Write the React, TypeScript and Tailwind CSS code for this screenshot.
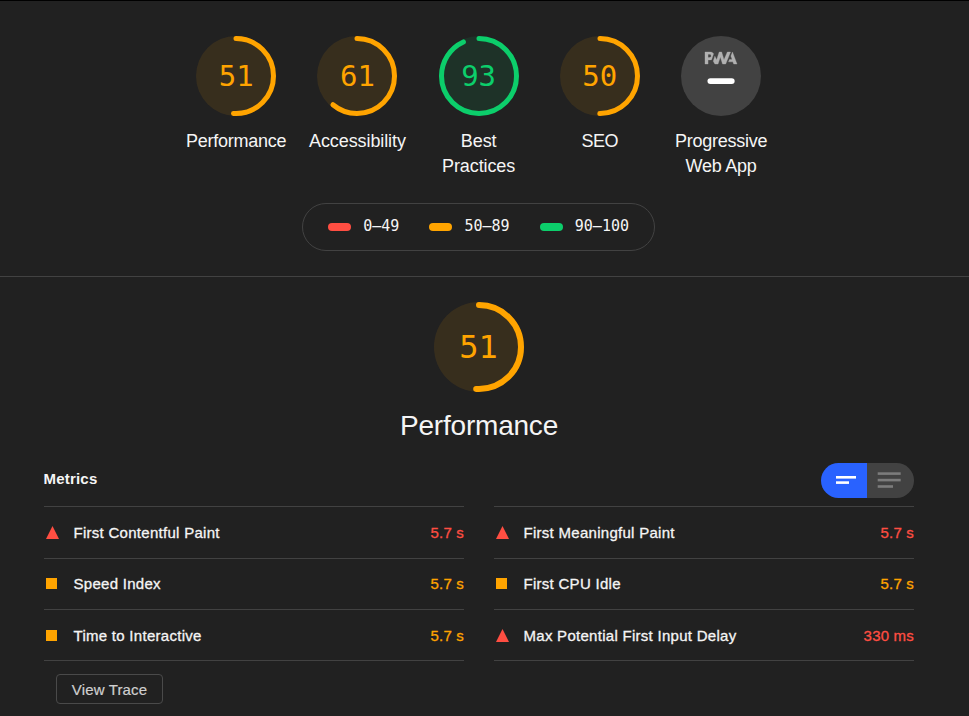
import React from "react";

type Tone = "pass" | "average" | "fail";

const textTone: Record<Tone, string> = {
  pass: "text-[#0cce6b]",
  average: "text-[#ffa400]",
  fail: "text-[#ff4e42]",
};

function Gauge({ score, tone, size, stroke, textClass }: { score: number; tone: Tone; size: number; stroke: number; textClass: string }) {
  const c = size / 2;
  const r = c - stroke / 2;
  const len = 2 * Math.PI * r;
  return (
    <div className={`grid place-items-center ${textTone[tone]}`}>
      <svg width={size} height={size} className="col-start-1 row-start-1">
        <circle cx={c} cy={c} r={c} fill="currentColor" fillOpacity="0.1" />
        <circle
          cx={c}
          cy={c}
          r={r}
          fill="none"
          stroke="currentColor"
          strokeWidth={stroke}
          strokeLinecap="round"
          strokeDasharray={`${(len * score) / 100} ${len}`}
          transform={`rotate(-90 ${c} ${c})`}
        />
      </svg>
      <span className={`col-start-1 row-start-1 font-['DejaVu_Sans_Mono',monospace] ${textClass}`}>{score}</span>
    </div>
  );
}

function PwaBadge() {
  return (
    <svg width="80" height="80" viewBox="0 0 60 60">
      <circle cx="30" cy="30" r="30" fill="#424242" />
      <g fill="#b0b0b0" stroke="#b0b0b0" strokeWidth="0.25">
        <path d="M35.66 19.39l.7-1.75h2L37.4 15 38.6 12l3.4 9h-2.51l-.58-1.61z" />
        <path d="M33.52 21l3.65-9h-2.42l-2.5 5.82L30.5 12h-1.86l-1.9 5.82-1.35-2.65-1.21 3.72L25.4 21h2.38l1.72-5.2 1.64 5.2z" />
        <path
          fillRule="evenodd"
          d="M20.3 17.91h1.48c.45 0 .85-.05 1.2-.15l.39-1.18 1.07-3.3a2.64 2.64 0 0 0-.28-.37c-.55-.6-1.36-.91-2.42-.91H18v9h2.3V17.9zm1.96-3.84c.22.22.33.5.33.87 0 .36-.1.65-.29.87-.2.23-.59.35-1.15.35h-.86v-2.41h.87c.52 0 .89.1 1.1.32z"
        />
      </g>
      <rect x="19.85" y="31.6" width="20.4" height="4.4" rx="2.2" fill="#fff" />
    </svg>
  );
}

const categories: { score: number; tone: Tone; lines: string[]; spacing: string }[] = [
  { score: 51, tone: "average", lines: ["Performance"], spacing: "tracking-[-0.25px]" },
  { score: 61, tone: "average", lines: ["Accessibility"], spacing: "tracking-[-0.1px]" },
  { score: 93, tone: "pass", lines: ["Best", "Practices"], spacing: "tracking-[-0.1px]" },
  { score: 50, tone: "average", lines: ["SEO"], spacing: "tracking-[-0.5px]" },
];

function Label({ lines, spacing }: { lines: string[]; spacing: string }) {
  return (
    <div className={`mt-[13px] text-center text-[18px] leading-[25px] ${spacing}`}>
      {lines.map((l) => (
        <div key={l}>{l}</div>
      ))}
    </div>
  );
}

function Legend() {
  const items = [
    { color: "bg-[#ff4e42]", text: "0–49" },
    { color: "bg-[#ffa400]", text: "50–89" },
    { color: "bg-[#0cce6b]", text: "90–100" },
  ];
  return (
    <div className="flex h-12 w-[353px] items-center gap-[30.2px] rounded-full border border-[#424242] pb-[2px] pl-[25px]">
      {items.map((i) => (
        <div key={i.text} className="flex items-center gap-3">
          <span className={`mt-px h-2 w-[23px] rounded-full ${i.color}`} />
          <span className="font-['DejaVu_Sans_Mono',monospace] text-[15px] leading-5">{i.text}</span>
        </div>
      ))}
    </div>
  );
}

interface MetricItem {
  name: string;
  value: string;
  tone: Tone;
}

const left: MetricItem[] = [
  { name: "First Contentful Paint", value: "5.7 s", tone: "fail" },
  { name: "Speed Index", value: "5.7 s", tone: "average" },
  { name: "Time to Interactive", value: "5.7 s", tone: "average" },
];
const right: MetricItem[] = [
  { name: "First Meaningful Paint", value: "5.7 s", tone: "fail" },
  { name: "First CPU Idle", value: "5.7 s", tone: "average" },
  { name: "Max Potential First Input Delay", value: "330 ms", tone: "fail" },
];

function MetricColumn({ items }: { items: MetricItem[] }) {
  return (
    <div className="grid w-[420px] grid-rows-[52px_51px_51px] border-b border-[#424242]">
      {items.map((m) => (
        <div
          key={m.name}
          className="flex items-center border-t border-[#424242] text-[15px] leading-5 [-webkit-text-stroke:0.3px] last:pt-[2px]"
        >
          <span className="w-[29.5px] pb-px pl-0.5">
            {m.tone === "fail" ? (
              <svg width="13" height="13" className="block fill-[#ff4e42]">
                <path d="M6.5 0L13 13H0z" />
              </svg>
            ) : (
              <span className="block h-[11px] w-[11px] bg-[#ffa400]" />
            )}
          </span>
          <span className="flex-1 tracking-[0.28px]">{m.name}</span>
          <span className={`tracking-[0.2px] ${textTone[m.tone]}`}>{m.value}</span>
        </div>
      ))}
    </div>
  );
}

export default function App() {
  return (
    <div className="h-[716px] w-[969px] overflow-hidden border-t border-black bg-[#212121] font-['Liberation_Sans',Arial,sans-serif] text-[#f5f5f5]">
      <header className="flex h-[276px] flex-col border-b border-[#424242] pt-[35px]">
        <div className="w-[957.3px]">
          <div className="mx-auto grid h-[167px] w-[606px] grid-cols-5">
            {categories.map((c) => (
              <div key={c.lines[0]} className="flex flex-col items-center">
                <Gauge score={c.score} tone={c.tone} size={80} stroke={5} textClass="text-[29px] leading-none" />
                <Label lines={c.lines} spacing={c.spacing} />
              </div>
            ))}
            <div className="flex flex-col items-center">
              <PwaBadge />
              <Label lines={["Progressive", "Web App"]} spacing="tracking-[-0.25px]" />
            </div>
          </div>
          <div className="flex justify-center">
            <Legend />
          </div>
        </div>
      </header>
      <main className="w-[958px] px-11 pt-[25px]">
        <div className="flex flex-col items-center">
          <Gauge score={51} tone="average" size={90} stroke={6} textClass="pr-px text-[32px] leading-none" />
          <h1 className="mt-[17px] text-[28px] leading-[34px] tracking-[-0.2px]">Performance</h1>
        </div>
        <div className="mt-[20px] flex h-[43px] items-start justify-between">
          <h2 className="-ml-[0.5px] mt-[6px] text-[15px] font-bold leading-5 tracking-[0.2px]">Metrics</h2>
          <div className="flex h-[35px] w-[93px] overflow-hidden rounded-full">
            <div className="w-[46px] bg-[#2962ff]">
              <svg width="46" height="35" fill="#fff">
                <rect x="15" y="13" width="20" height="2.6" />
                <rect x="15" y="18.3" width="13" height="2.6" />
              </svg>
            </div>
            <div className="w-[47px] bg-[#424242]">
              <svg width="47" height="35" fill="#7c7c7c">
                <rect x="10.7" y="9.3" width="23" height="2.6" />
                <rect x="10.7" y="15.8" width="23" height="2.6" />
                <rect x="10.7" y="22.2" width="15.3" height="2.6" />
              </svg>
            </div>
          </div>
        </div>
        <div className="flex gap-[30px]">
          <MetricColumn items={left} />
          <MetricColumn items={right} />
        </div>
        <button className="ml-3 mt-[13px] h-[30px] w-[107px] rounded-[4px] border border-[#4a4a4a] pt-[2px] text-[15px] leading-5 tracking-[0.15px] text-[#cfcfcf] [-webkit-text-stroke:0.2px]">
          View Trace
        </button>
      </main>
    </div>
  );
}
